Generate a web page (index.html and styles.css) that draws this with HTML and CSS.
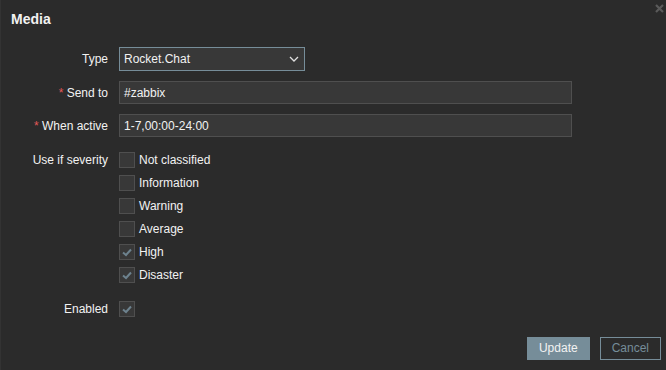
FILE: index.html
```html
<!DOCTYPE html>
<html>
<head>
<meta charset="utf-8">
<link rel="stylesheet" href="styles.css">
</head>
<body>
<div class="dialog">
  <div class="header">Media</div>
  <button class="close" aria-label="Close">
    <svg width="9" height="9" viewBox="0 0 9 9"><path d="M1 1L8 8M8 1L1 8" stroke="#5a5a5a" stroke-width="2.2"/></svg>
  </button>
  <div class="form">
    <div class="row">
      <label class="lbl">Type</label>
      <div class="select">
        <span>Rocket.Chat</span>
        <svg width="10" height="6" viewBox="0 0 10 6"><path d="M1 1L5 5L9 1" fill="none" stroke="#e0e0e0" stroke-width="1.3"/></svg>
      </div>
    </div>
    <div class="row">
      <label class="lbl"><span class="req">*</span> Send to</label>
      <div class="input">#zabbix</div>
    </div>
    <div class="row">
      <label class="lbl"><span class="req">*</span> When active</label>
      <div class="input">1-7,00:00-24:00</div>
    </div>
    <div class="row top sev">
      <label class="lbl line">Use if severity</label>
      <div class="list">
        <div class="cb"><span class="box"></span>Not classified</div>
        <div class="cb"><span class="box"></span>Information</div>
        <div class="cb"><span class="box"></span>Warning</div>
        <div class="cb"><span class="box"></span>Average</div>
        <div class="cb"><span class="box"><svg width="14" height="14" viewBox="0 0 14 14"><path d="M3 7.5L6 10L11 4.5" fill="none" stroke="#6d828e" stroke-width="2"/></svg></span>High</div>
        <div class="cb"><span class="box"><svg width="14" height="14" viewBox="0 0 14 14"><path d="M3 7.5L6 10L11 4.5" fill="none" stroke="#6d828e" stroke-width="2"/></svg></span>Disaster</div>
      </div>
    </div>
    <div class="row en">
      <label class="lbl">Enabled</label>
      <div class="cb"><span class="box"><svg width="14" height="14" viewBox="0 0 14 14"><path d="M3 7.5L6 10L11 4.5" fill="none" stroke="#6d828e" stroke-width="2"/></svg></span></div>
    </div>
  </div>
  <div class="footer">
    <button class="btn primary">Update</button>
    <button class="btn alt">Cancel</button>
  </div>
</div>
</body>
</html>
```
FILE: styles.css
```css
html, body {
  margin: 0;
  padding: 0;
  background: #2b2b2b;
}
body {
  font-family: "Liberation Sans", Arial, sans-serif;
  font-size: 12px;
  color: #f2f2f2;
}
.dialog {
  position: relative;
  height: 370px;
  box-sizing: border-box;
  border-left: 1px solid #333;
}
.header {
  padding: 11px 0 0 10px;
  font-size: 14px;
  font-weight: bold;
  line-height: 17px;
}
.close {
  position: absolute;
  right: 2px;
  top: 4px;
  background: none;
  border: 0;
  padding: 0;
  width: 9px;
  height: 9px;
  line-height: 0;
}
.form {
  margin-top: 19px;
}
.row {
  display: grid;
  grid-template-columns: 107px 1fr;
  column-gap: 11px;
  align-items: center;
  margin-bottom: 10px;
}
.row.top { align-items: start; }
.sev { margin-top: 15px; }
.en { margin-top: 18px; }
.lbl {
  text-align: right;
  white-space: nowrap;
}
.lbl.line { line-height: 16px; }
.req { color: #e45959; }
.select, .input {
  box-sizing: border-box;
  height: 24px;
  background: #383838;
  border: 1px solid #4f4f4f;
  display: flex;
  align-items: center;
  padding: 0 4px;
}
.select {
  width: 186px;
  border-color: #768d99;
  justify-content: space-between;
  padding-right: 5px;
}
.input {
  width: 453px;
  height: 23px;
}
.list {
  display: flex;
  flex-direction: column;
  gap: 7px;
}
.cb {
  display: flex;
  align-items: center;
  line-height: 16px;
}
.box {
  box-sizing: border-box;
  width: 16px;
  height: 16px;
  background: #383838;
  border: 1px solid #4f4f4f;
  margin-right: 4px;
  display: flex;
  align-items: center;
  justify-content: center;
}
.footer {
  display: flex;
  justify-content: flex-end;
  gap: 10px;
  margin-top: 20px;
  padding-right: 5px;
}
.btn {
  box-sizing: border-box;
  height: 23px;
  padding: 0 11px;
  border: 1px solid #768d99;
  font-family: "Liberation Sans", Arial, sans-serif;
  font-size: 12px;
  line-height: 21px;
}
.primary {
  background: #768d99;
  color: #f2f2f2;
}
.alt {
  background: transparent;
  color: #768d99;
}
```
